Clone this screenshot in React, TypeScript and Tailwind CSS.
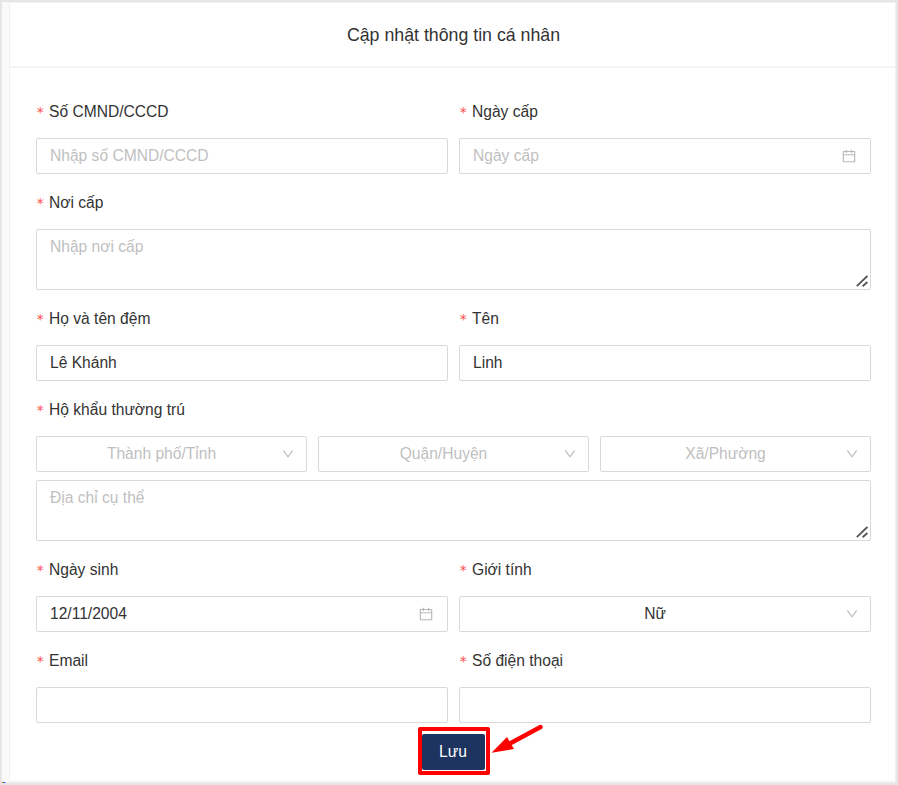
import type { ReactNode } from "react";
import { AiOutlineCalendar, AiOutlineDown } from "react-icons/ai";

const control =
  "block w-full rounded-[2px] border border-[#d9d9d9] bg-white px-[13px] text-[#333] placeholder:text-[#bfbfbf] outline-none";

export default function App() {
  return (
    <div className="relative flex h-[785px] w-[898px] flex-col border-2 border-[#e6e6e6] bg-[#fafafa] font-['Liberation_Sans',Arial,sans-serif] text-[15.6px] text-[#333]">
      <div className="ml-[7px] flex-1 border border-b-2 border-[#f1f1f1] bg-white">
        <header className="flex h-[65px] items-center justify-center border-b-2 border-[#f4f4f4] pt-px pl-[2px] text-[17.75px]">
          <h1>Cập nhật thông tin cá nhân</h1>
        </header>

        <form className="pt-[15px] pr-[24px] pl-[26px]">
          <div className="grid grid-cols-2 gap-x-[11px]">
            <Field label="Số CMND/CCCD">
              <TextInput placeholder="Nhập số CMND/CCCD" />
            </Field>
            <Field label="Ngày cấp">
              <DateInput placeholder="Ngày cấp" />
            </Field>
          </div>

          <Field label="Nơi cấp">
            <TextArea placeholder="Nhập nơi cấp" />
          </Field>

          <div className="grid grid-cols-2 gap-x-[11px]">
            <Field label="Họ và tên đệm">
              <TextInput value="Lê Khánh" />
            </Field>
            <Field label="Tên">
              <TextInput value="Linh" />
            </Field>
          </div>

          <Field label="Hộ khẩu thường trú">
            <div className="mb-[8px] grid grid-cols-3 gap-x-[11px]">
              <Select placeholder="Thành phố/Tỉnh" />
              <Select placeholder="Quận/Huyện" />
              <Select placeholder="Xã/Phường" />
            </div>
            <TextArea placeholder="Địa chỉ cụ thể" />
          </Field>

          <div className="grid grid-cols-2 gap-x-[11px]">
            <Field label="Ngày sinh">
              <DateInput value="12/11/2004" />
            </Field>
            <Field label="Giới tính">
              <Select value="Nữ" />
            </Field>
            <Field label="Email">
              <TextInput />
            </Field>
            <Field label="Số điện thoại">
              <TextInput />
            </Field>
          </div>

          <div className="mt-[4px] flex justify-center">
            <div className="relative rounded-[2px] border-4 border-[#ff0000] pt-[3px] pr-px pb-px">
              <button
                type="button"
                className="block h-[36px] w-[63px] rounded-[2px] bg-[#1d3461] text-white"
              >
                Lưu
              </button>
              <Arrow />
            </div>
          </div>
        </form>
      </div>
      <div className="absolute bottom-0 left-0 flex h-px">
        <span className="w-px bg-[#ff4020]" />
        <span className="w-px bg-[#20b040]" />
        <span className="w-px bg-[#2050ff]" />
        <span className="w-px bg-[#a0a0ff]" />
      </div>
    </div>
  );
}

/* ---------- Form pieces ---------- */
function Field({ label, children }: { label: string; children: ReactNode }) {
  return (
    <div>
      <label className="flex h-[55px] items-center pt-[2px]">
        <span className="mr-[4px] w-[9px] pt-[2px] font-['DejaVu_Sans_Mono',monospace] text-[14px] text-[#ff4d4f]">
          *
        </span>
        {label}
      </label>
      {children}
    </div>
  );
}

function TextInput({
  value,
  placeholder,
}: {
  value?: string;
  placeholder?: string;
}) {
  return (
    <input
      className={`${control} h-[36px]`}
      defaultValue={value}
      placeholder={placeholder}
    />
  );
}

function DateInput({
  value,
  placeholder,
}: {
  value?: string;
  placeholder?: string;
}) {
  return (
    <div className={`${control} flex! h-[36px] items-center`}>
      <input
        className="min-w-0 flex-1 outline-none placeholder:text-[#bfbfbf]"
        defaultValue={value}
        placeholder={placeholder}
      />
      <AiOutlineCalendar className="size-[16px] text-[#b8b8b8]" />
    </div>
  );
}

function Select({
  value,
  placeholder,
}: {
  value?: string;
  placeholder?: string;
}) {
  return (
    <div className={`${control} flex! h-[36px] items-center pr-[11px]!`}>
      <span
        className={`flex-1 pr-[8px] text-center ${value ? "" : "text-[#bfbfbf]"}`}
      >
        {value || placeholder}
      </span>
      <AiOutlineDown className="size-[14px] text-[#b8b8b8]" />
    </div>
  );
}

function TextArea({ placeholder }: { placeholder: string }) {
  return (
    <div className="relative">
      <textarea
        className={`${control} h-[61px] resize-none pt-[4px] leading-[25px]`}
        placeholder={placeholder}
      />
      <svg
        className="absolute right-[3px] bottom-[3px] size-[12px]"
        viewBox="0 0 12 12"
        fill="none"
        stroke="#555"
        strokeWidth="1.8"
      >
        <path d="M0.8 11.2 L11.4 1 M6.6 11.2 L11.4 7" />
      </svg>
    </div>
  );
}

/* Red pointer next to the save button */
function Arrow() {
  return (
    <svg
      className="absolute top-[-8px] left-[69px] h-[32px] w-[54px]"
      viewBox="0 0 54 32"
    >
      <path
        d="M49.5 4 L18 21"
        stroke="#ff0000"
        strokeWidth="4.4"
        strokeLinecap="round"
      />
      <path d="M0.5 29.7 L16 14 L23 26 Z" fill="#ff0000" />
    </svg>
  );
}
